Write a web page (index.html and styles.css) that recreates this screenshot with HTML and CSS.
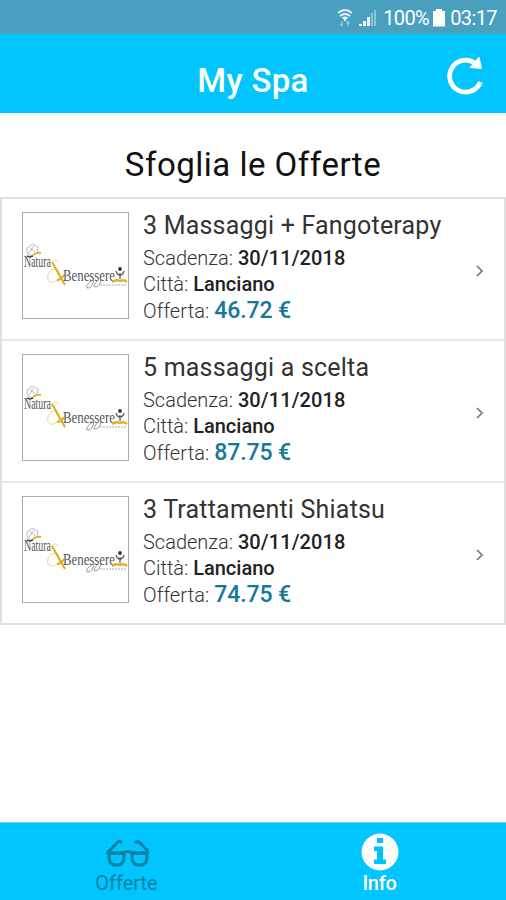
FILE: index.html
```html
<!DOCTYPE html>
<html lang="it">
<head>
<meta charset="utf-8">
<title>My Spa</title>
<link rel="stylesheet" href="styles.css">
</head>
<body>
<svg class="defs" width="0" height="0">
  <symbol id="logo" viewBox="0 0 105 105">
    <g fill="none" stroke="#aaa" stroke-width=".8">
      <path d="M4 35l5-4 6 3-1 6-5 3-5-3zM7 34l5 5M11 33l-5 7"/>
    </g>
    <path d="M10 42q3-3 8-2" fill="none" stroke="#e0b52e" stroke-width="2"/>
    <path d="M4 43l3 1 3-1" fill="none" stroke="#444" stroke-width="1.4"/>
    <text class="logo-text" x="1" y="54" textLength="27" lengthAdjust="spacingAndGlyphs">Natura</text>
    <path d="M36 49c-5-5-9 0-5 4s8 9 3 14-11 1-9-5c1-4 4-6 8-6" fill="none" stroke="#ead58e" stroke-width="1"/>
    <path d="M29 49l13 23M34 67q4 0 7-5" fill="none" stroke="#e0ad19" stroke-width="2"/>
    <text class="logo-text" x="40" y="68" textLength="52" lengthAdjust="spacingAndGlyphs">Benessere</text>
    <path d="M70 67q-8 5-6 8 5 1 7-8M75 67q-6 7-3 7 5 0 6-8" fill="none" stroke="#888" stroke-width=".9"/>
    <circle cx="97" cy="56" r="1.9" fill="#333"/>
    <path d="M93 58q1 4 4 4t4-4M97 60v6" fill="none" stroke="#555" stroke-width="1.2"/>
    <path d="M89 69q4-3 8-1 4-2 7 1" fill="none" stroke="#dfb02c" stroke-width="2.4"/>
    <path d="M77 72h27" stroke="#aaa" stroke-width="1" stroke-dasharray="2 1"/>
  </symbol>
</svg>
<div class="status">
  <svg class="wifi" width="16" height="20" viewBox="0 0 16 20" fill="none" stroke="#e4f2f8" stroke-width="1.8"><path d="M1 5q7-6 14 0M3 8q5-4 10 0M5.500 10.500q2.500-2 5 0"/><path d="M8 10v3" stroke-width="2"/><path d="M5 13v5M3.500 16.500L5 18M11 18v-4M9.500 15L11 13.500l1.500 1.500" stroke="#9dcbde" stroke-width="1.200"/></svg>
  <svg class="signal" width="17" height="17" viewBox="0 0 17 17" fill="#eaf6fb"><path d="M0 14h3v2H0zM4 11h3v5H4zM8 7h3v9H8z"/><path d="M12 3h2v13h-2zM15 0h2v16h-2z" fill="#8fc3d7"/></svg>
  <span class="percent">100%</span>
  <svg class="battery" width="12" height="18" viewBox="0 0 12 18"><path d="M3 0h6v2h3v15.500H0V2h3z" fill="#fff"/></svg>
  <span class="clock">03:17</span>
</div>
<header class="bar">
  <h1>My Spa</h1>
  <svg class="refresh" width="36" height="40" viewBox="0 0 36 40"><path d="M28.500 8.500A16 16 0 1 0 33.500 27" fill="none" stroke="#fff" stroke-width="4.800"/><path d="M32 2l2.500 11.500-11.500-1z" fill="#fff" stroke="#fff" stroke-linejoin="round"/></svg>
</header>
<main>
  <h2>Sfoglia le Offerte</h2>
  <div class="list">
    <article class="offer">
      <svg class="thumb"><use href="#logo"/></svg>
      <div class="info">
        <h3>3 Massaggi + Fangoterapy</h3>
        <p>Scadenza: <b class="date">30/11/2018</b></p>
        <p>Città: <b>Lanciano</b></p>
        <p class="price">Offerta: <strong>46.72 €</strong></p>
      </div>
      <svg class="chevron" viewBox="0 0 8 12"><path d="M1 1l5 5-5 5"/></svg>
    </article>
    <article class="offer">
      <svg class="thumb"><use href="#logo"/></svg>
      <div class="info">
        <h3>5 massaggi a scelta</h3>
        <p>Scadenza: <b class="date">30/11/2018</b></p>
        <p>Città: <b>Lanciano</b></p>
        <p class="price">Offerta: <strong>87.75 €</strong></p>
      </div>
      <svg class="chevron" viewBox="0 0 8 12"><path d="M1 1l5 5-5 5"/></svg>
    </article>
    <article class="offer">
      <svg class="thumb"><use href="#logo"/></svg>
      <div class="info">
        <h3>3 Trattamenti Shiatsu</h3>
        <p>Scadenza: <b class="date">30/11/2018</b></p>
        <p>Città: <b>Lanciano</b></p>
        <p class="price">Offerta: <strong>74.75 €</strong></p>
      </div>
      <svg class="chevron" viewBox="0 0 8 12"><path d="M1 1l5 5-5 5"/></svg>
    </article>
  </div>
</main>
<nav class="tabs">
  <div class="tab muted">
    <svg width="44" height="38" viewBox="0 0 44 38" fill="none" stroke="#08829f" stroke-width="3" stroke-linejoin="round"><path d="M17 10l-3-2L3 19M30 10l3-2 11 11M1 20h17q5-3 9 0h17"/><path d="M4 20h15v4q0 8-7 8h-1q-7 0-7-8zM27 20h15v4q0 8-7 8h-1q-7 0-7-8z"/></svg>
    <span>Offerte</span>
  </div>
  <div class="tab">
    <svg width="38" height="38" viewBox="0 0 38 38"><circle cx="19" cy="19" r="18.500" fill="#fff"/><path d="M16 5h6v5h-6zM13 13.500h9v13h3V31H13v-4.500h3V18h-3z" fill="#00c3fb"/></svg>
    <span>Info</span>
  </div>
</nav>
</body>
</html>
```
FILE: styles.css
```css
* { box-sizing: border-box; }
body {
  margin: 0;
  height: 900px;
  display: flex;
  flex-direction: column;
  overflow: hidden;
  background: #fff;
  font-family: Roboto, "Liberation Sans", sans-serif;
}
h1, h2, h3, p { margin: 0; }
.defs { display: none; }
.status {
  height: 34px;
  flex: none;
  background: #489fbe;
  color: #fff;
  display: flex;
  align-items: center;
  justify-content: flex-end;
  padding: 2px 9px 0 0;
  font-size: 20px;
}
.wifi { margin-right: 6px; }
.signal { margin-right: 7px; }
.percent { letter-spacing: -0.6px; }
.battery { margin: 0 5px 0 4px; }
.clock { letter-spacing: -0.6px; }
.bar {
  height: 79px;
  flex: none;
  background: #00c5ff;
  color: #fff;
  display: grid;
  grid-template-columns: 60px 1fr 60px;
  align-items: center;
}
.bar h1 {
  grid-column: 2;
  text-align: center;
  font-size: 33px;
  font-weight: 500;
  line-height: 40px;
  letter-spacing: 0.3px;
  padding-top: 14px;
}
.refresh { justify-self: start; margin: 3px 0 0 1px; }
main { flex: 1; }
h2 {
  height: 84px;
  padding-top: 31px;
  line-height: 42px;
  text-align: center;
  font-size: 33px;
  font-weight: 400;
  letter-spacing: 0.5px;
  color: #111;
}
.list { border: 2px solid #e0e0e0; }
.offer {
  height: 142px;
  display: flex;
  align-items: flex-start;
  padding: 13px 20px 0;
  border-bottom: 2px solid #e9e9e9;
}
.offer:last-child { height: 140px; border-bottom: 0; }
.thumb {
  width: 107px;
  height: 107px;
  border: 1px solid #aaa;
  flex: none;
}
.logo-text {
  font-family: "Liberation Serif", serif;
  font-size: 16px;
  fill: #555;
}
.info { flex: 1; margin-left: 14px; white-space: nowrap; }
.info h3 {
  font-size: 25px;
  font-weight: 400;
  line-height: 30px;
  letter-spacing: 0.2px;
  margin: -1px 0 4px;
  color: #333;
}
.info p {
  font-size: 20px;
  line-height: 26px;
  font-weight: 300;
  color: #333;
}
.info b { font-weight: 500; color: #222; }
.info .date { letter-spacing: 0.1px; }
.info .price { line-height: 28px; letter-spacing: 0.1px; }
.info strong { font-size: 23px; font-weight: 500; letter-spacing: -0.1px; color: #15789b; }
.chevron {
  width: 8px;
  height: 12px;
  margin-top: 53px;
  fill: none;
  stroke: #777;
  stroke-width: 1.7;
}
.tabs {
  height: 78px;
  flex: none;
  background: #00c5ff;
  border-top: 1px solid #65d6fa;
  display: grid;
  grid-template-columns: 1fr 1fr;
}
.tab {
  display: flex;
  flex-direction: column;
  align-items: center;
  padding-top: 10px;
  color: #fff;
  font-size: 20px;
  line-height: 24px;
}
.muted { color: #08829f; }
.tab:not(.muted) span { font-weight: 500; letter-spacing: -0.3px; }
```
